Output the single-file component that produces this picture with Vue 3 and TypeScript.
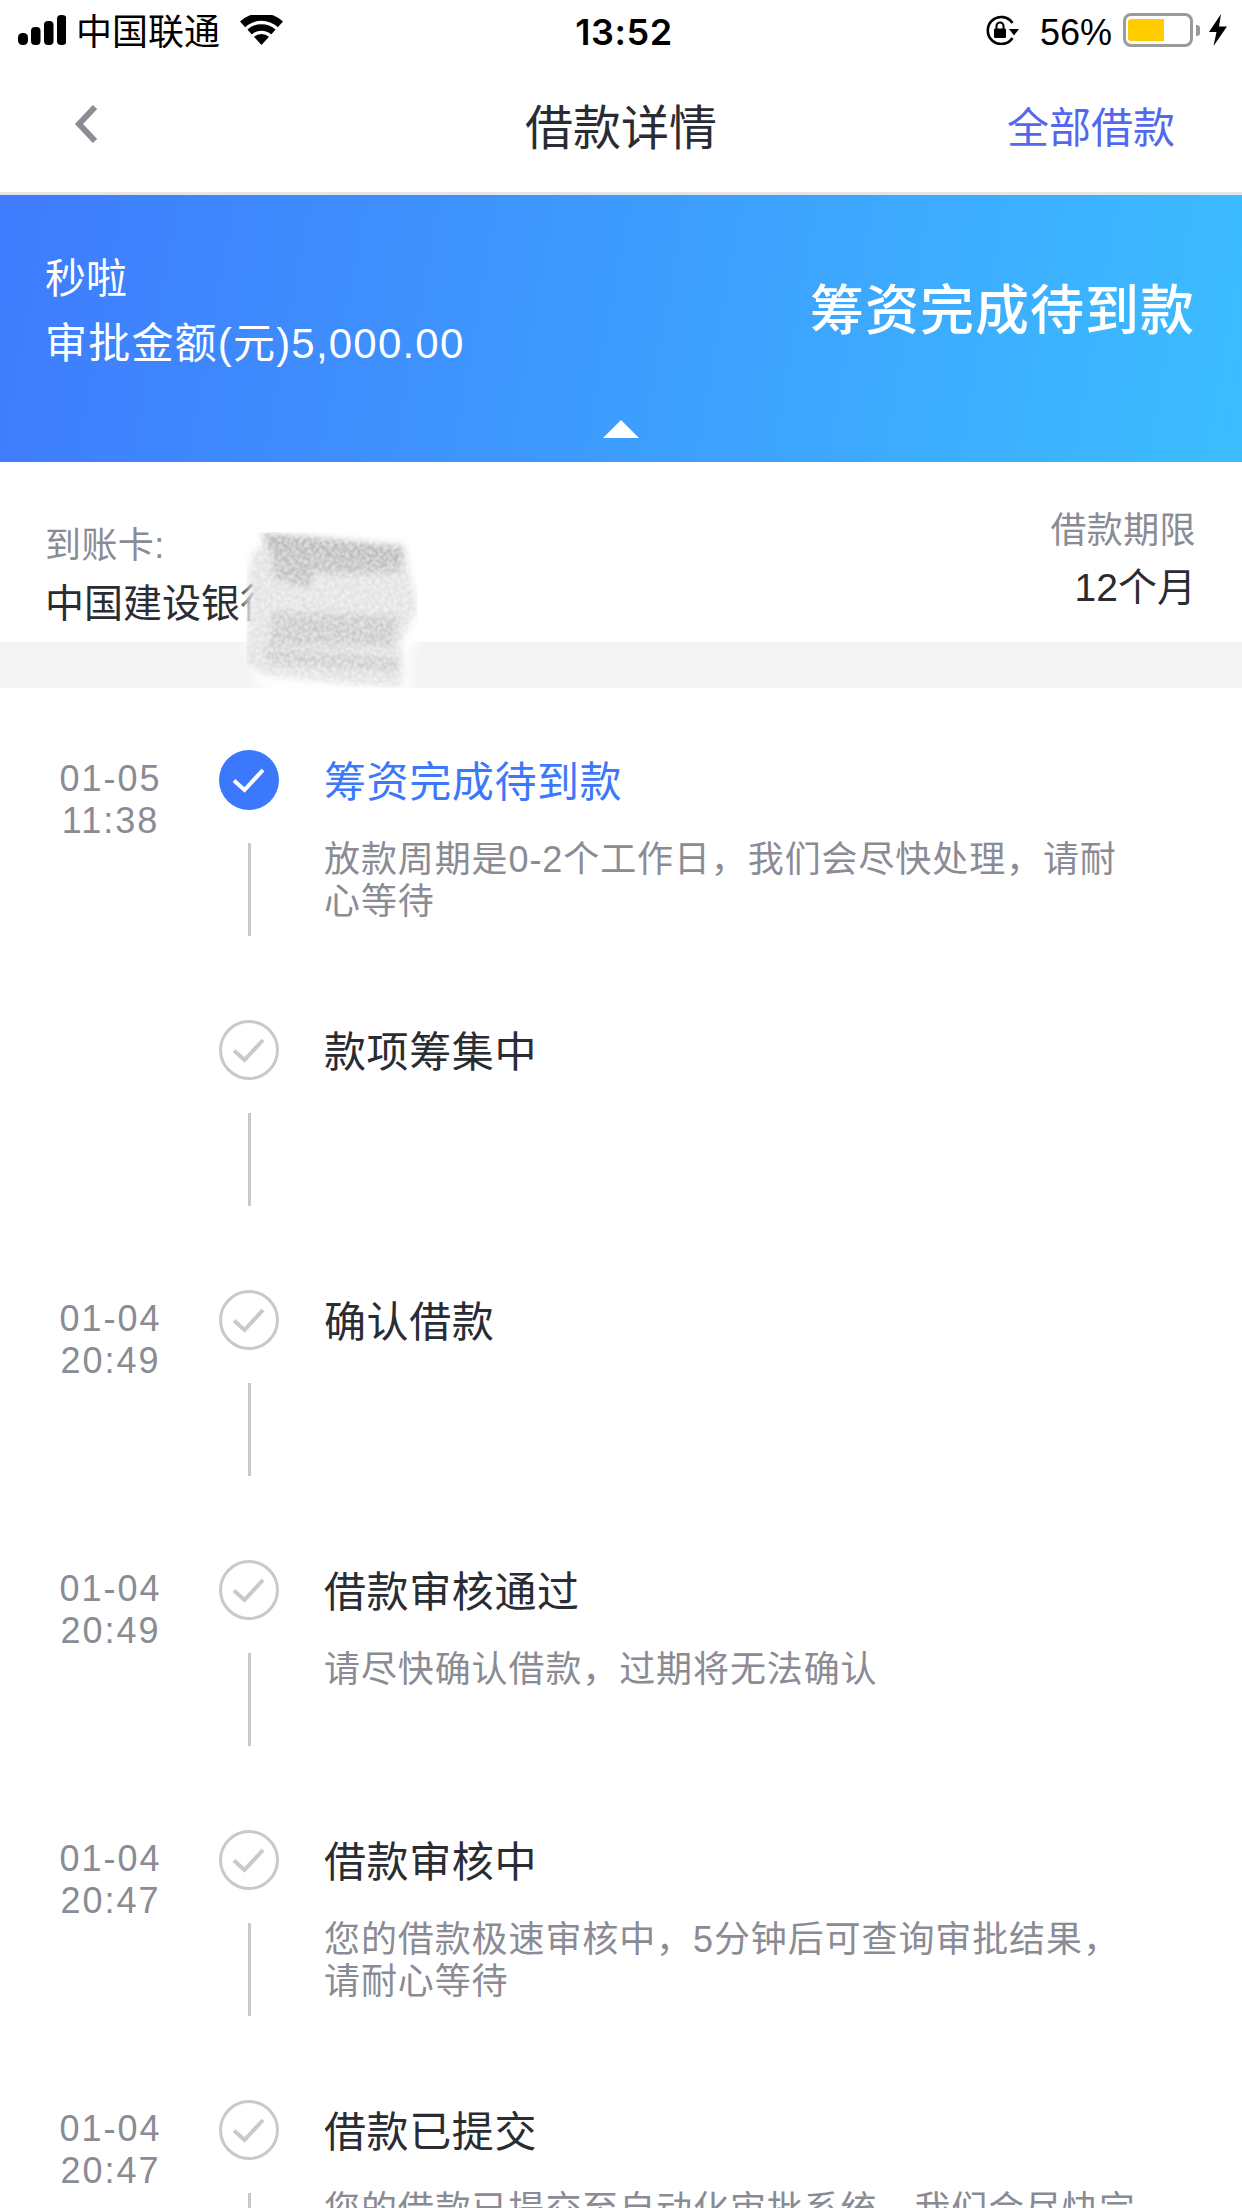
<script setup lang="ts">
interface Step {
  date?: string
  time?: string
  title: string
  desc?: string
  active?: boolean
}

const steps: Step[] = [
  { date: '01-05', time: '11:38', title: '筹资完成待到款', desc: '放款周期是0-2个工作日，我们会尽快处理，请耐心等待', active: true },
  { title: '款项筹集中' },
  { date: '01-04', time: '20:49', title: '确认借款' },
  { date: '01-04', time: '20:49', title: '借款审核通过', desc: '请尽快确认借款，过期将无法确认' },
  { date: '01-04', time: '20:47', title: '借款审核中', desc: '您的借款极速审核中，5分钟后可查询审批结果，请耐心等待' },
  { date: '01-04', time: '20:47', title: '借款已提交', desc: '您的借款已提交至自动化审批系统，我们会尽快完成审核' }
]
</script>

<template>
  <div class="page">
    <div class="status">
      <div class="status-left">
        <svg class="signal" width="48" height="30" viewBox="0 0 48 30">
          <rect x="0" y="18" width="10" height="12" rx="4.5" />
          <rect x="13" y="12" width="9.5" height="18" rx="4" />
          <rect x="26" y="6" width="9.5" height="24" rx="4" />
          <rect x="39" y="0" width="9.5" height="30" rx="4" />
        </svg>
        <span class="carrier">中国联通</span>
        <svg class="wifi" width="43" height="30" viewBox="0 0 43 30">
          <path d="M21.5 30 14 21.8a11.2 11.2 0 0 1 15 0z" />
          <path d="M11.8 19.4 7.4 14.6a21 21 0 0 1 28.2 0l-4.4 4.8a14.6 14.6 0 0 0-19.4 0z" />
          <path d="M5.2 12.2 0 6.6a31.6 31.6 0 0 1 43 0l-5.2 5.6a24 24 0 0 0-32.6 0z" />
        </svg>
      </div>
      <div class="clock">13:52</div>
      <div class="status-right">
        <svg class="lock" width="36" height="30" viewBox="0 0 36 30">
          <path d="M28.500 8A13.500 13.500 0 1 0 28.500 23" fill="none" stroke="#000" stroke-width="2.600" />
          <path d="M25 14h10l-5 6.500z" />
          <rect x="10" y="13.500" width="12" height="9.500" rx="1.200" />
          <path d="M12.500 14V11a3.500 3.500 0 0 1 7 0v3" fill="none" stroke="#000" stroke-width="2" />
        </svg>
        <span class="percent">56%</span>
        <div class="battery"><div class="battery-fill"></div></div>
        <div class="battery-nub"></div>
        <svg class="bolt" width="18" height="32" viewBox="0 0 18 32">
          <path d="M12 0 0 18h7.500L4.500 32 18 12.500H10z" />
        </svg>
      </div>
    </div>

    <div class="nav">
      <svg class="back" width="26" height="40" viewBox="0 0 26 40">
        <path d="M22 3 6 20l16 17" fill="none" stroke="#8b8c96" stroke-width="6" />
      </svg>
      <div class="nav-title">借款详情</div>
      <div class="nav-action">全部借款</div>
    </div>

    <div class="banner">
      <div class="banner-left">
        <div class="product">秒啦</div>
        <div class="amount">审批金额(元)5,000.00</div>
      </div>
      <div class="banner-status">筹资完成待到款</div>
      <div class="banner-arrow"></div>
    </div>

    <div class="info">
      <div class="card">
        <div class="info-label">到账卡:</div>
        <div class="info-value">中国建设银行</div>
      </div>
      <div class="term">
        <div class="info-label">借款期限</div>
        <div class="info-value term-value">12个月</div>
      </div>
    </div>
    <div class="band"></div>

    <svg class="smudge" width="210" height="210" viewBox="0 0 210 210">
      <defs>
        <filter id="soft" x="-20%" y="-20%" width="140%" height="140%">
          <feGaussianBlur stdDeviation="6" />
        </filter>
        <filter id="grain" x="0" y="0" width="100%" height="100%">
          <feTurbulence type="fractalNoise" baseFrequency="0.5" numOctaves="3" seed="11" result="n" />
          <feColorMatrix in="n" type="matrix" values="0 0 0 0 0.36  0 0 0 0 0.36  0 0 0 0 0.36  0 0 0 4 -1.400" result="g" />
          <feGaussianBlur in="g" stdDeviation="0.8" result="gb" />
          <feComposite in="gb" in2="SourceAlpha" operator="in" />
        </filter>
        <filter id="edge" x="-10%" y="-10%" width="120%" height="120%"><feGaussianBlur stdDeviation="3.500" /></filter>
      </defs>
      <path d="M26 30 170 24 186 60 196 92 176 150 178 186 150 204 60 204 22 166 12 100z" fill="#fff" filter="url(#soft)" />
      <g filter="url(#grain)">
        <g filter="url(#edge)">
          <path d="M22 36 174 40 186 96 170 128 170 176 110 172 34 164 14 150 16 60z" fill="#000" fill-opacity=".42" />
          <path d="M30 20 172 34 170 50 34 38z" fill="#000" />
          <path d="M40 36 170 46 168 60 110 62 82 60 76 76 42 66z" fill="#000" fill-opacity=".85" />
          <path d="M40 100 166 104 162 134 38 132z" fill="#000" fill-opacity=".6" />
          <path d="M32 134 168 146 166 160 36 152z" fill="#000" fill-opacity=".5" />
        </g>
      </g>
    </svg>

    <div class="timeline">
      <div v-for="(step, i) in steps" :key="i" class="step">
        <div class="when">
          <div>{{ step.date }}</div>
          <div>{{ step.time }}</div>
        </div>
        <div class="node">
          <svg width="60" height="60" viewBox="0 0 60 60">
            <circle v-if="step.active" cx="30" cy="30" r="30" fill="#3c78fb" />
            <circle v-else cx="30" cy="30" r="28.500" fill="none" stroke="#c9c9c9" stroke-width="3" />
            <path
              d="M15 30.500 25.500 40 44 20"
              fill="none"
              :stroke="step.active ? '#fff' : '#c9c9c9'"
              stroke-width="4"
            />
          </svg>
          <div class="node-line"></div>
        </div>
        <div class="body">
          <div class="step-title" :class="{ on: step.active }">{{ step.title }}</div>
          <div v-if="step.desc" class="step-desc">{{ step.desc }}</div>
        </div>
      </div>
    </div>
  </div>
</template>

<style scoped>
.page {
  position: relative;
  width: 1242px;
  height: 2208px;
  overflow: hidden;
  background: #fff;
  color: #2a2c33;
  font-family: "Liberation Sans", "Noto Sans CJK SC", sans-serif;
}
.status {
  display: grid;
  grid-template-columns: 1fr auto 1fr;
  align-items: center;
  height: 60px;
  padding: 0 15px 0 18px;
  color: #000;
}
.status-left, .status-right { display: flex; align-items: center; }
.status-right { justify-content: flex-end; }
.signal, .wifi, .lock, .bolt { flex: none; fill: #000; }
.carrier { margin-left: 10px; padding-top: 5px; font-size: 36px; line-height: 55px; }
.wifi { margin-left: 20px; }
.clock { margin-left: 3px; padding-top: 3px; font-family: Inter, "Liberation Sans", sans-serif; font-size: 36px; font-weight: 600; letter-spacing: .6px; }
.percent { margin-left: 20px; padding-top: 5px; font-size: 36px; line-height: 55px; }
.battery {
  width: 70px;
  height: 34px;
  margin-left: 11px;
  padding: 3px 2px;
  box-sizing: border-box;
  border: 3px solid #9a9a9a;
  border-radius: 8px;
}
.battery-fill { width: 36px; height: 100%; background: #fc0; border-radius: 3px 0 0 3px; }
.battery-nub { width: 4px; height: 11px; margin-left: 3px; background: #9a9a9a; border-radius: 0 3px 3px 0; }
.bolt { margin-left: 9px; }
.nav {
  position: relative;
  display: flex;
  align-items: center;
  justify-content: center;
  height: 132px;
  border-bottom: 3px solid #e6e6e6;
}
.back { position: absolute; left: 73px; top: 44px; }
.nav-title { padding-top: 5px; font-size: 48px; line-height: 127px; }
.nav-action {
  position: absolute;
  right: 67px;
  top: 3px;
  font-size: 42px;
  line-height: 132px;
  color: #5468ee;
}
.banner {
  position: relative;
  display: flex;
  align-items: center;
  justify-content: space-between;
  height: 267px;
  padding: 0 47px 34px 45px;
  box-sizing: border-box;
  background: linear-gradient(100deg, #3f7bfd 0%, #3cbdff 100%);
  color: #fff;
}
.product { font-size: 41px; line-height: 58px; }
.amount { margin-top: 7px; font-size: 42px; letter-spacing: 1.200px; line-height: 58px; }
.banner-status { margin-bottom: 10px; font-size: 54px; font-weight: 500; letter-spacing: 1px; }
.banner-arrow {
  position: absolute;
  left: 603px;
  bottom: 24px;
  border-left: 18px solid transparent;
  border-right: 18px solid transparent;
  border-bottom: 18px solid #fff;
}
.info {
  display: flex;
  justify-content: space-between;
  align-items: flex-start;
  height: 180px;
  padding: 0 46px 0 45px;
  box-sizing: border-box;
}
.card { padding-top: 60px; }
.term { padding-top: 45px; text-align: right; }
.info-label { font-size: 36px; letter-spacing: .4px; line-height: 48px; color: #8a8b94; }
.info-value { margin-top: 10px; font-size: 39px; line-height: 48px; }
.term-value { margin-top: 9px; }
.band { height: 46px; background: #f4f4f4; }
.smudge { position: absolute; left: 232px; top: 512px; }
.timeline { padding-top: 62px; }
.step {
  display: grid;
  grid-template-columns: 219px 60px 1fr;
  height: 270px;
}
.when {
  padding: 8px 0 0 2px;
  text-align: center;
  font-size: 36px;
  letter-spacing: 2px;
  line-height: 42px;
  color: #8a8b94;
}
.node { display: flex; flex-direction: column; align-items: center; }
.node svg { flex: none; }
.node-line { width: 3px; height: 93px; margin-top: 33px; background: #c9c9c9; }
.body { padding: 3px 106px 0 45px; }
.step-title { font-size: 42px; letter-spacing: .6px; line-height: 60px; }
.step-title.on { color: #3c78fb; }
.step-desc {
  margin-top: 26px;
  font-size: 36px;
  letter-spacing: .9px;
  line-height: 42px;
  color: #8a8b94;
}
</style>

<style>
html, body { margin: 0; background: #fff; }
</style>
